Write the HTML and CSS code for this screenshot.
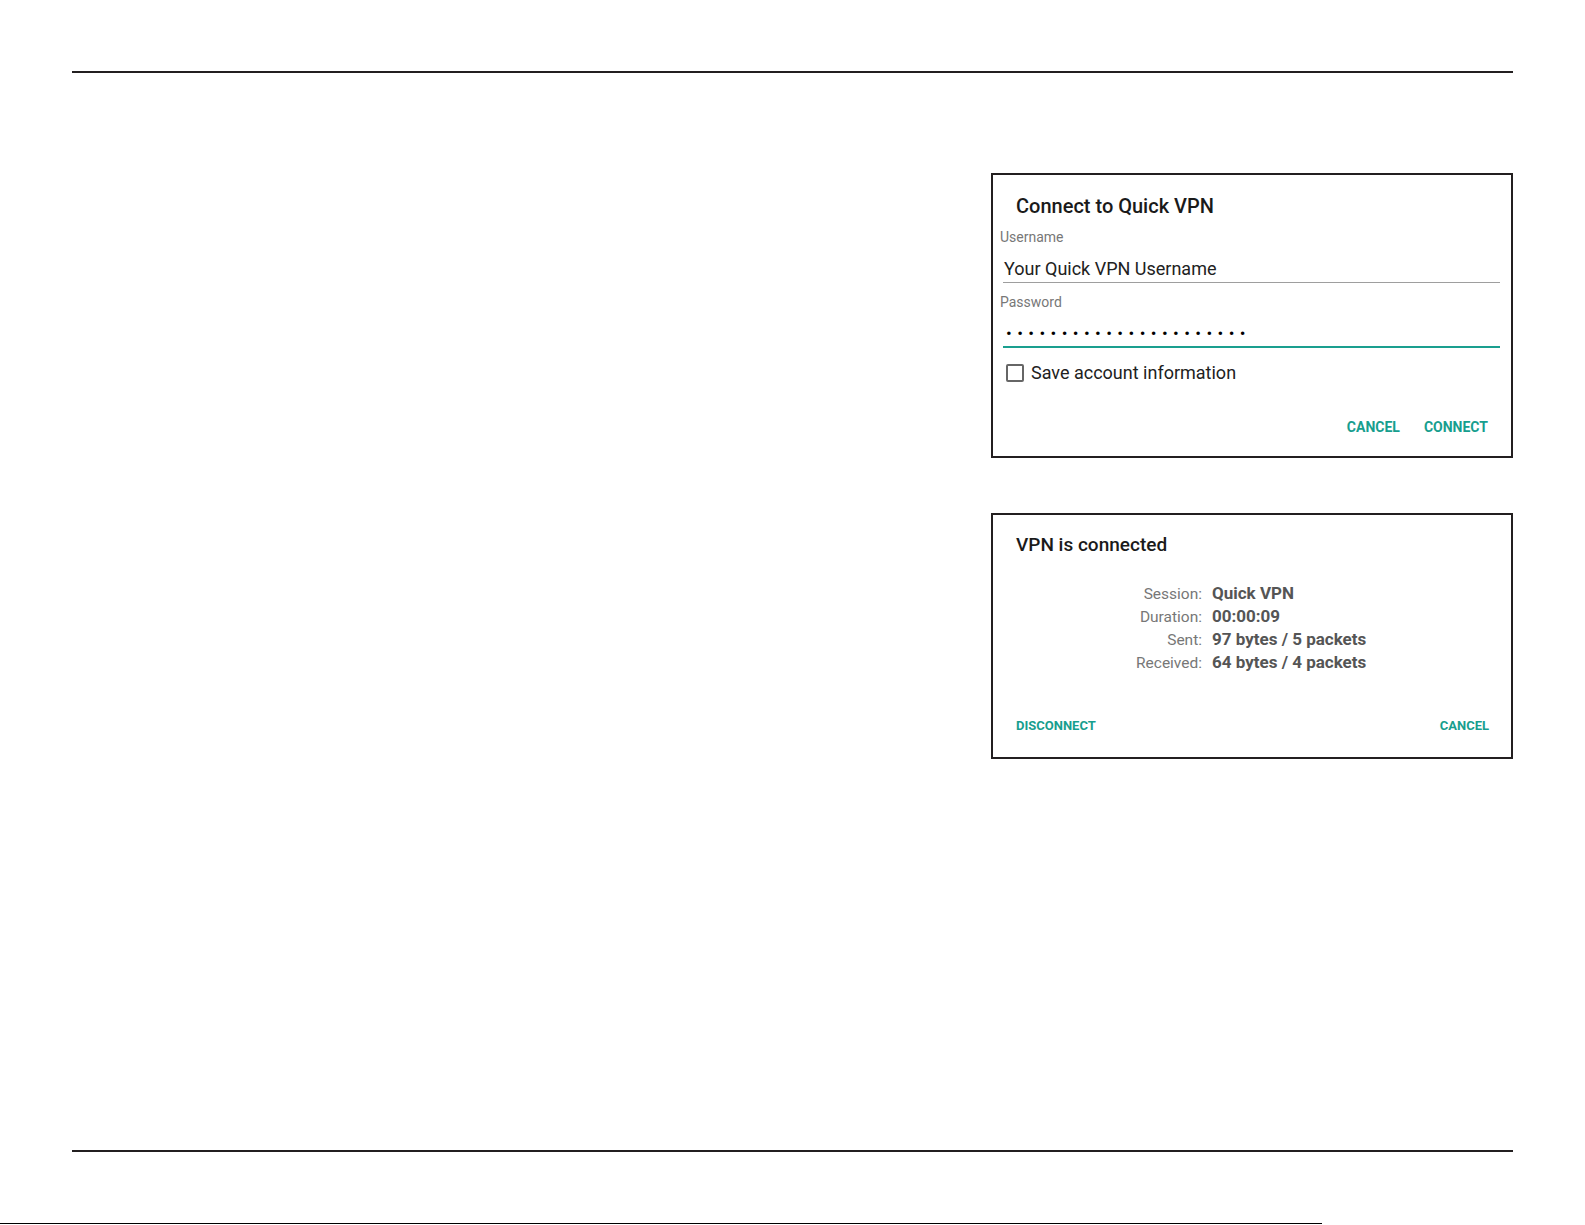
FILE: index.html
```html
<!DOCTYPE html>
<html lang="en">
<head>
  <meta charset="UTF-8">
  <title>Quick VPN</title>
  <link rel="stylesheet" href="styles.css">
</head>
<body>
  <div class="page">
    <div class="rule"></div>
    <div class="main">
      <div class="dialogs">
        <div class="dialog login">
          <h2 class="title">Connect to Quick VPN</h2>
          <div class="label">Username</div>
          <div class="field">Your Quick VPN Username</div>
          <div class="label">Password</div>
          <div class="field active"><span class="dots">••••••••••••••••••••••</span></div>
          <label class="check">
            <span class="box"></span>
            <span>Save account information</span>
          </label>
          <div class="actions">
            <button>CANCEL</button>
            <button>CONNECT</button>
          </div>
        </div>

        <div class="dialog status">
          <h2 class="title">VPN is connected</h2>
          <div class="info">
            <span class="key">Session:</span><span class="val">Quick VPN</span>
            <span class="key">Duration:</span><span class="val">00:00:09</span>
            <span class="key">Sent:</span><span class="val">97 bytes / 5 packets</span>
            <span class="key">Received:</span><span class="val">64 bytes / 4 packets</span>
          </div>
          <div class="actions split">
            <button>DISCONNECT</button>
            <button>CANCEL</button>
          </div>
        </div>
      </div>
    </div>
    <div class="rule"></div>
  </div>
  <div class="edge"></div>
</body>
</html>
```

FILE: styles.css
```css
body {
  margin: 0;
  background: #fff;
  font-family: Roboto, 'Liberation Sans', sans-serif;
  color: #212121;
}
.page {
  width: 1441px;
  margin-left: 72px;
  padding-top: 71px;
}
.rule {
  height: 2px;
  background: #231f20;
}
.main {
  height: 1077px;
  display: flex;
  justify-content: flex-end;
}
.dialogs {
  width: 522px;
  padding-top: 100px;
  display: flex;
  flex-direction: column;
  gap: 55px;
}
.dialog {
  border: 2px solid #231f20;
  background: #fff;
}
.title {
  margin: 0;
  font-size: 20px;
  line-height: 24px;
  font-weight: 500;
  color: #1a1a1a;
}

/* login dialog */
.login {
  padding: 19px 11px 21px 7px;
}
.login .title {
  margin-left: 16px;
}
.label {
  margin-top: 11px;
  font-size: 14px;
  line-height: 16px;
  color: #777;
}
.field {
  margin: 13px 0 0 3px;
  padding: 0 0 2px 1px;
  font-size: 18px;
  line-height: 22px;
  border-bottom: 1px solid #9e9e9e;
}
.field.active {
  margin-top: 12px;
  padding: 0 0 2px 3px;
  border-bottom: 2px solid #1a9f8f;
}
.dots {
  font-size: 17px;
  letter-spacing: 5.4px;
  color: #000;
}
.check {
  margin: 14px 0 0 6px;
  display: flex;
  align-items: center;
  gap: 7px;
  font-size: 18px;
  line-height: 22px;
}
.check .box {
  width: 14px;
  height: 14px;
  border: 2px solid #666;
  border-radius: 2px;
}
.actions {
  display: flex;
  justify-content: flex-end;
  gap: 24px;
}
.actions button {
  border: none;
  background: none;
  padding: 0;
  font-family: inherit;
  font-weight: 700;
  font-size: 14px;
  line-height: 16px;
  color: #179e8e;
  cursor: pointer;
}
.login .actions {
  margin: 35px 12px 0 0;
}

/* status dialog */
.status {
  padding: 18px 22px 23px 23px;
}
.status .title {
  font-size: 19px;
}
.info {
  margin-top: 25px;
  display: grid;
  grid-template-columns: 186px auto;
  grid-auto-rows: 23px;
  column-gap: 10px;
  align-items: baseline;
}
.key {
  text-align: right;
  font-size: 15.5px;
  line-height: 21px;
  color: #777;
}
.val {
  font-size: 17px;
  line-height: 23px;
  font-weight: 700;
  color: #555;
}
.actions.split {
  margin-top: 44px;
  justify-content: space-between;
}
.split button {
  font-size: 13px;
}
.edge {
  width: 1322px;
  height: 1px;
  margin-top: 71px;
  background: #000;
}
```
